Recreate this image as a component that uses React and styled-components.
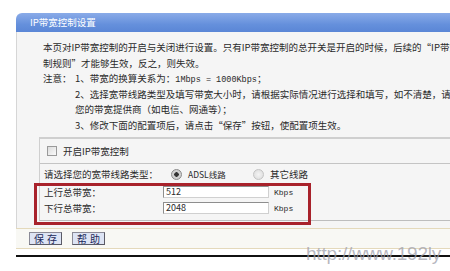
import React from 'react'
import styled, { createGlobalStyle } from 'styled-components';

const GlobalStyle = createGlobalStyle`
    html, body {
        margin: 0;
        padding: 0;
        background: #fff;
        overflow: hidden;
    }
    body {
        font-family: "Noto Sans CJK SC", "DejaVu Sans", sans-serif;
    }
`

const Page = styled.div`
    position: relative;
    width: 450px;
    height: 271px;
    overflow: hidden;
    padding-top: 13px;
    box-sizing: border-box;
`

const Panel = styled.div`
    margin-left: 16px;
    width: 470px;
`

const Header = styled.div`
    height: 19px;
    line-height: 19px;
    padding-left: 14px;
    border-radius: 6px 0 0 0;
    background: linear-gradient(#8aabe8, #6590dc 60%, #5a86d6);
    color: #fff;
    font-size: 9.5px;
`

const Body = styled.div`
    background: #f5f5f5;
    border-left: 1px solid #d6d6d6;
    padding: 8px 0 7px 0;
`

const Intro = styled.div`
    padding-left: 26px;
    font-size: 9.5px;
    color: #2a2a2a;
    white-space: nowrap;
`

const Line = styled.div`
    height: 15.5px;
    line-height: 15.5px;
    padding-left: ${p => p.$indent ? '32px' : '0'};
`

const Lead = styled.span`
    display: inline-block;
    width: 32px;
`

const Mono = styled.span`
    font-family: "Liberation Mono", monospace;
    font-size: 8.5px;
    line-height: 1;
`

const Section = styled.div`
    position: relative;
    margin: 4px 0 0 22px;
    border-top: 2px solid #cfcfcf;
    border-left: 1px solid #cfcfcf;
    border-bottom: 1px solid #bdbdbd;
    padding-bottom: 4px;
    font-size: 9.5px;
    color: #2a2a2a;
`

const Row = styled.div`
    display: flex;
    align-items: center;
    height: ${p => p.$h}px;
    padding-left: ${p => p.$pad || 4}px;
    border-bottom: ${p => p.$line ? '1px solid #c4c4c4' : 'none'};
    white-space: nowrap;
`

const Label = styled.span`
    display: inline-block;
    width: ${p => p.$w}px;
`

const Check = styled.span`
    width: 8px;
    height: 8px;
    border: 1px solid #9a9a9a;
    background: linear-gradient(135deg, #dcdcdc, #fafafa);
    margin-right: 6px;
`

const Radio = styled.span`
    width: 9px;
    height: 9px;
    border-radius: 50%;
    border: 1px solid ${p => p.$on ? '#8a8a8a' : '#c4c4c4'};
    background: ${p => p.$on
        ? 'radial-gradient(circle, #333 0 2px, #d0d0d0 2.5px)'
        : 'radial-gradient(circle, #f4f4f4, #dadada)'};
    margin-right: 6px;
`

const Option = styled.span`
    display: inline-flex;
    align-items: center;
    width: ${p => p.$w}px;
    font-size: ${p => p.$small ? '8.5px' : '9.5px'};
`

const Input = styled.div`
    box-sizing: border-box;
    width: 106px;
    height: 12px;
    border: 1px solid #8e8e8e;
    border-right-color: #d0d0d0;
    border-bottom-color: #d0d0d0;
    background: #fff;
    font-size: 9px;
    line-height: 10px;
    padding-left: 2px;
    margin-right: 5px;
`

const Unit = styled.span`
    font-family: "Liberation Mono", monospace;
    font-size: 8px;
`

const RedBox = styled.div`
    position: absolute;
    left: -6px;
    top: 44px;
    width: 277px;
    height: 42px;
    box-sizing: border-box;
    border: 3px solid #a8222b;
`

const Footer = styled.div`
    display: flex;
    align-items: center;
    gap: 10px;
    height: 19px;
    padding-left: 13px;
    background: #f8f8f4;
    border-top: 1px solid #e4d9bb;
    border-bottom: 1px solid #e4d9bb;
`

const Button = styled.div`
    box-sizing: border-box;
    width: 33px;
    height: 13px;
    border: 1px solid #5a5a66;
    border-top-color: #8a8a96;
    border-left-color: #8a8a96;
    background: #dde4f4;
    color: #1e2a5a;
    font-size: 10px;
    line-height: 11px;
    text-align: center;
    letter-spacing: 3px;
    padding-left: 3px;
`

const Rule = styled.div`
    margin: 6px 0 0 16px;
    height: 2px;
    background: #111;
`

const Watermark = styled.div`
    position: absolute;
    left: 306px;
    top: 243px;
    font-family: "Liberation Sans", Arial, sans-serif;
    font-size: 19px;
    letter-spacing: -0.2px;
    color: rgba(160, 160, 172, 0.75);
    white-space: nowrap;
`

const App = () => {
    return (
        <Page>
            <GlobalStyle />
            <Panel>
                <Header>IP带宽控制设置</Header>
                <Body>
                    <Intro>
                        <Line>本页对IP带宽控制的开启与关闭进行设置。只有IP带宽控制的总开关是开启的时候，后续的“IP带宽控</Line>
                        <Line>制规则”才能够生效，反之，则失效。</Line>
                        <Line><Lead>注意：</Lead>1、带宽的换算关系为：<Mono>1Mbps = 1000Kbps</Mono>；</Line>
                        <Line $indent>2、选择宽带线路类型及填写带宽大小时，请根据实际情况进行选择和填写，如不清楚，请咨询</Line>
                        <Line $indent>您的带宽提供商（如电信、网通等）；</Line>
                        <Line $indent>3、修改下面的配置项后，请点击“保存”按钮，使配置项生效。</Line>
                    </Intro>
                    <Section>
                        <Row $h={24} $pad={7} $line>
                            <Check />开启IP带宽控制
                        </Row>
                        <Row $h={20}>
                            <Label $w={127}>请选择您的宽带线路类型：</Label>
                            <Option $w={82} $small><Radio $on />ADSL线路</Option>
                            <Option $w={80}><Radio />其它线路</Option>
                        </Row>
                        <Row $h={16}>
                            <Label $w={119}>上行总带宽：</Label>
                            <Input>512</Input>
                            <Unit>Kbps</Unit>
                        </Row>
                        <Row $h={16}>
                            <Label $w={119}>下行总带宽：</Label>
                            <Input>2048</Input>
                            <Unit>Kbps</Unit>
                        </Row>
                        <RedBox />
                    </Section>
                </Body>
                <Footer>
                    <Button>保存</Button>
                    <Button>帮助</Button>
                </Footer>
            </Panel>
            <Rule />
            <Watermark>http://www.192ly</Watermark>
        </Page>
    )
}

export default App
